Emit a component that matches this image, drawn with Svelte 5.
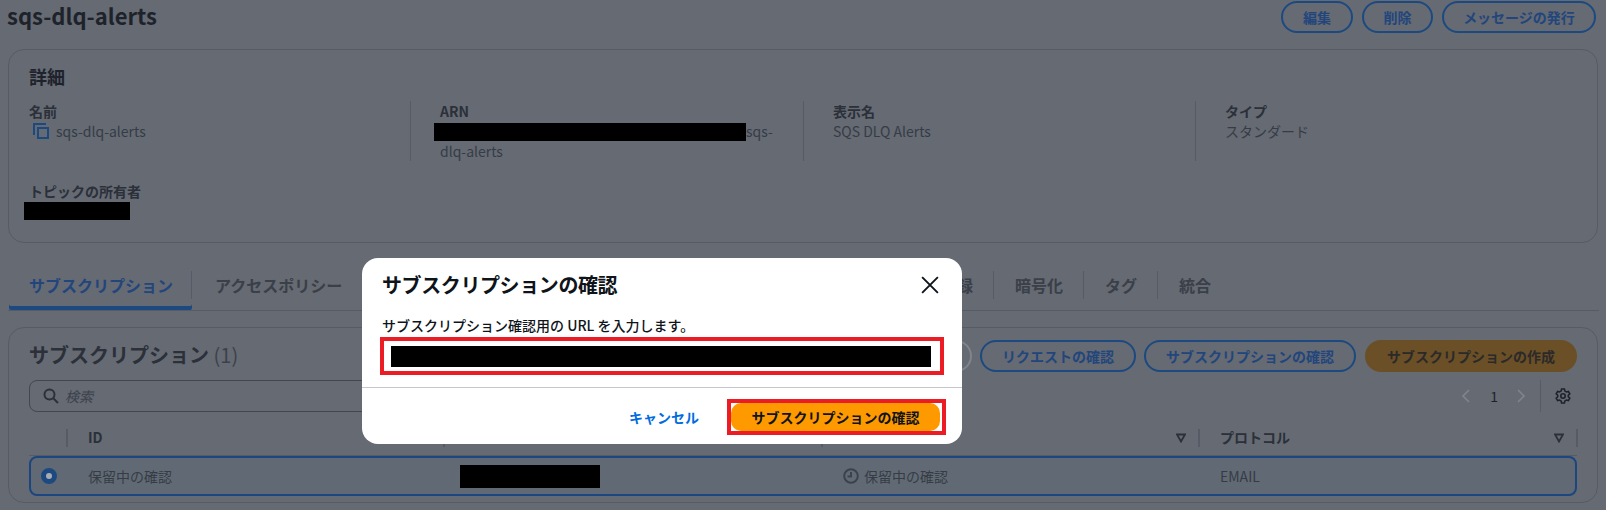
<script lang="ts">
  const details = [
    { label: "名前", value: "sqs-dlq-alerts", copy: true },
    { label: "ARN", arn: true },
    { label: "表示名", value: "SQS DLQ Alerts" },
    { label: "タイプ", value: "スタンダード" },
  ];
  const tabs = [
    "サブスクリプション",
    "アクセスポリシー",
    "データ保護ポリシー",
    "配信ポリシー (HTTP/S)",
    "配信ステータスのログ記録",
    "暗号化",
    "タグ",
    "統合",
  ];
</script>

<div class="page">
  <header class="head">
    <h1>sqs-dlq-alerts</h1>
    <div class="actions">
      <button class="btn edit">編集</button>
      <button class="btn del">削除</button>
      <button class="btn pub">メッセージの発行</button>
    </div>
  </header>

  <section class="card details">
    <h2>詳細</h2>
    <div class="grid">
      {#each details as d, i}
        <div class="cell" class:first={i === 0}>
          <div class="label">{d.label}</div>
          {#if d.arn}
            <div class="value arn"><span class="redact arn-box"></span>sqs-<br />dlq-alerts</div>
          {:else}
            <div class="value">
              {#if d.copy}
                <svg class="copy" viewBox="0 0 16 16" width="16" height="16" fill="none" stroke="#1c4a80" stroke-width="2">
                  <path d="M1 12V1h12" />
                  <rect x="5" y="5" width="10" height="10" />
                </svg>
              {/if}
              {d.value}
            </div>
          {/if}
        </div>
      {/each}
      <div class="cell owner first">
        <div class="label">トピックの所有者</div>
        <span class="redact owner-box"></span>
      </div>
    </div>
  </section>

  <nav class="tabs">
    {#each tabs as t, i}
      <div class="tab" class:active={i === 0}><span>{t}</span></div>
    {/each}
  </nav>

  <section class="card subs">
    <div class="subs-head">
      <div class="subs-title">サブスクリプション <span class="count">(1)</span></div>
      <div class="subs-actions">
        <button class="btn off">編集</button>
        <button class="btn off">削除</button>
        <button class="btn">リクエストの確認</button>
        <button class="btn">サブスクリプションの確認</button>
        <button class="btn primary">サブスクリプションの作成</button>
      </div>
    </div>

    <div class="tools">
      <div class="search">
        <svg viewBox="0 0 16 16" width="16" height="16" fill="none" stroke="#2b3039" stroke-width="2">
          <circle cx="6.5" cy="6.5" r="5" />
          <path d="M10.5 10.5 15 15" />
        </svg>
        <em>検索</em>
      </div>
      <div class="pager">
        <svg viewBox="0 0 10 16" width="10" height="16" fill="none" stroke="#80858d" stroke-width="1.6"><path d="M8 2 2 8l6 6" /></svg>
        <span>1</span>
        <svg viewBox="0 0 10 16" width="10" height="16" fill="none" stroke="#80858d" stroke-width="1.6"><path d="m2 2 6 6-6 6" /></svg>
        <div class="pager-div">
          <svg viewBox="0 0 16 16" width="16" height="16" fill="none" stroke="#1e232b" stroke-width="1.6">
            <path d="M6.6 1h2.8l.5 2.1 1.5.9 2-.6 1.4 2.4-1.5 1.5v1.4l1.5 1.5-1.4 2.4-2-.6-1.5.9-.5 2.1H6.6l-.5-2.1-1.500-.9-2 .6L1.200 10.200l1.500-1.500V7.300L1.200 5.800l1.400-2.400 2 .6 1.500-.9z" />
            <circle cx="8" cy="8" r="2.200" />
          </svg>
        </div>
      </div>
    </div>

    <div class="thead">
      <div class="th"></div>
      <div class="th">ID</div>
      <div class="th"></div>
      <div class="th"><svg class="tri" viewBox="0 0 10 10" width="10" height="10"><path d="M1 1.500h8L5 8.500z" fill="none" stroke="#2b3039" stroke-width="1.800" /></svg></div>
      <div class="th">プロトコル<svg class="tri" viewBox="0 0 10 10" width="10" height="10"><path d="M1 1.500h8L5 8.500z" fill="none" stroke="#2b3039" stroke-width="1.800" /></svg></div>
    </div>
    <div class="row">
      <div class="td"><span class="radio"></span></div>
      <div class="td">保留中の確認</div>
      <div class="td"><span class="redact row-box"></span></div>
      <div class="td status">
        <svg viewBox="0 0 16 16" width="16" height="16" fill="none" stroke="#3c424b" stroke-width="2">
          <circle cx="8" cy="8" r="6.800" />
          <path d="M8 4v4.500H4.500" />
        </svg>
        保留中の確認
      </div>
      <div class="td">EMAIL</div>
    </div>
  </section>

  <div class="modal" role="dialog">
    <div class="modal-head">
      <h3>サブスクリプションの確認</h3>
      <svg viewBox="0 0 16 16" width="18" height="18" fill="none" stroke="#0f141a" stroke-width="1.700">
        <path d="M1 1l14 14M15 1 1 15" />
      </svg>
    </div>
    <div class="modal-body">
      <div class="modal-label">サブスクリプション確認用の URL を入力します。</div>
      <div class="mark url"><span class="redact url-box"></span></div>
    </div>
    <div class="modal-foot">
      <span class="cancel">キャンセル</span>
      <div class="mark confirm"><button>サブスクリプションの確認</button></div>
    </div>
  </div>
</div>

<style>
  :global(body) {
    margin: 0;
    background: #656a73;
  }
  .page {
    position: relative;
    height: 510px;
    width: 1606px;
    overflow: hidden;
    box-sizing: border-box;
    padding: 1px 8px 0;
    background: #656a73;
    color: #363c46;
    font-family: "Noto Sans CJK JP", "Noto Sans", sans-serif;
    font-size: 14px;
    line-height: 20px;
  }
  .head {
    display: flex;
    justify-content: space-between;
    align-items: center;
    height: 32px;
  }
  h1 {
    margin: -4px 0 0 -1px;
    font-size: 22px;
    font-weight: 700;
    line-height: 32px;
    color: #1e232b;
  }
  .actions {
    display: flex;
    gap: 9px;
    margin-right: 2px;
  }
  .btn {
    box-sizing: border-box;
    height: 32px;
    padding: 0 20px;
    border: 2px solid #1c4a80;
    border-radius: 16px;
    background: transparent;
    color: #22467c;
    font: 700 14px/1 "Noto Sans CJK JP", sans-serif;
    white-space: nowrap;
  }
  .edit { width: 72px; padding: 0; }
  .del { width: 71px; padding: 0; }
  .pub { width: 154px; padding: 0; }
  .card {
    box-sizing: border-box;
    width: 1590px;
    border: 1px solid #565b65;
    border-radius: 16px;
  }
  .details {
    height: 194px;
    margin-top: 16px;
    padding: 14px 0 0 20px;
  }
  h2 {
    margin: 0;
    font-size: 18px;
    font-weight: 700;
    line-height: 24px;
    color: #1e232b;
  }
  .grid {
    display: grid;
    grid-template-columns: 381px 393px 392px 1fr;
    row-gap: 20px;
    margin-top: 13px;
  }
  .cell {
    min-height: 60px;
    padding-left: 29px;
    border-left: 1px solid #565b65;
  }
  .cell.first {
    padding-left: 0;
    border-left: 0;
  }
  .owner {
    grid-column: 1 / 2;
    min-height: 0;
  }
  .label {
    font-weight: 700;
    color: #2b3039;
  }
  .value {
    display: flex;
    align-items: center;
    gap: 7px;
  }
  .value.arn {
    display: block;
  }
  .copy {
    margin-left: 4px;
  }
  .redact {
    display: inline-block;
    background: #000;
  }
  .arn-box {
    width: 312px;
    height: 18px;
    margin-left: -6px;
    vertical-align: -4px;
  }
  .owner-box {
    display: block;
    width: 106px;
    height: 18px;
    margin-left: -5px;
    margin-top: 1px;
  }
  .tabs {
    display: flex;
    gap: 1px;
    height: 44px;
    width: 1590px;
    margin-top: 23px;
    border-bottom: 1px solid #565b65;
    box-sizing: content-box;
    align-items: stretch;
    padding-left: 1px;
  }
  .tab {
    position: relative;
    display: flex;
    align-items: center;
    padding: 0 0 7px;
    font-size: 16px;
    font-weight: 700;
    white-space: nowrap;
    color: #3a3f48;
  }
  .tab span {
    padding: 0 20px;
    line-height: 28px;
    border-right: 1px solid #565b65;
  }
  .tab:last-child span {
    border-right: 0;
  }
  .tab:nth-child(4) span {
    padding-right: 19px;
  }
  .tab.active {
    margin-right: 2px;
    color: #22467c;
    box-shadow: inset 0 -4px 0 #1c4a80;
    border-radius: 2px;
  }
  .tab.active span {
    padding-right: 18px;
  }
  .subs {
    height: 176px;
    margin-top: 16px;
    padding: 12px 20px 0;
  }
  .subs-head {
    display: flex;
    justify-content: space-between;
    align-items: center;
    height: 32px;
  }
  .subs-title {
    margin-top: -3px;
    font-size: 20px;
    font-weight: 700;
    line-height: 28px;
    color: #2b3039;
  }
  .count {
    font-weight: 400;
    color: #3c424b;
  }
  .subs-actions {
    display: flex;
    gap: 8px;
  }
  .off {
    border-color: #80858d;
    color: #80858d;
  }
  .primary {
    margin-left: 1px;
    background: #6b4f27;
    border-color: #6b4f27;
    color: #2b2a29;
  }
  .tools {
    display: flex;
    justify-content: space-between;
    margin-top: 8px;
    height: 32px;
  }
  .search {
    box-sizing: border-box;
    display: flex;
    align-items: center;
    gap: 6px;
    width: 800px;
    padding-left: 13px;
    border: 1px solid #43484f;
    border-radius: 8px;
  }
  .search em {
    color: #3c424b;
  }
  .pager {
    display: flex;
    align-items: center;
    color: #1e232b;
    gap: 20px;
  }
  .pager span {
    margin: 0 -2px 0 -1px;
  }
  .pager-div {
    display: flex;
    align-items: center;
    height: 32px;
    margin-left: -6px;
    padding: 0 6px 0 14px;
    border-left: 1px solid #565b65;
  }
  .thead, .row {
    display: grid;
    grid-template-columns: 39px 377px 378px 377px 378px;
  }
  .thead {
    height: 37px;
    margin-top: 7px;
    border-bottom: 1px solid #565b65;
    box-sizing: border-box;
    font-weight: 700;
    color: #2b3039;
  }
  .th {
    position: relative;
    display: flex;
    align-items: center;
    height: 36px;
    padding-left: 20px;
  }
  .th::after {
    content: "";
    position: absolute;
    right: 0;
    top: 10px;
    height: 18px;
    width: 2px;
    background: #565b65;
  }
  .tri {
    position: absolute;
    right: 14px;
    top: 14px;
  }
  .row {
    box-sizing: border-box;
    height: 40px;
    border: 2px solid #1c4680;
    border-radius: 8px;
    background: #616a74;
  }
  .td {
    display: flex;
    align-items: center;
    gap: 5px;
    padding-left: 18px;
  }
  .td:first-child {
    padding-left: 10px;
  }
  .td:nth-child(2) {
    padding-left: 18px;
  }
  .td:nth-child(3) {
    padding-left: 13px;
  }
  .radio {
    box-sizing: border-box;
    width: 16px;
    height: 16px;
    border: 5px solid #1c4a80;
    border-radius: 50%;
    background: #a9adb3;
  }
  .row-box {
    width: 140px;
    height: 23px;
  }
  .modal {
    position: absolute;
    left: 362px;
    top: 258px;
    width: 600px;
    height: 186px;
    background: #fff;
    border-radius: 16px;
    color: #0f141a;
  }
  .modal-head {
    display: flex;
    justify-content: space-between;
    align-items: center;
    padding: 12px 23px 0 20px;
    height: 30px;
  }
  h3 {
    margin: 0;
    font-size: 20px;
    font-weight: 700;
    line-height: 30px;
    letter-spacing: -0.4px;
  }
  .modal-body {
    padding: 15px 18px 0;
    height: 88px;
    box-sizing: border-box;
    border-bottom: 1px solid #c6c6cd;
  }
  .modal-label {
    padding-left: 2px;
    font-size: 14px;
    font-weight: 500;
    line-height: 20px;
  }
  .mark {
    box-sizing: border-box;
    border: 4px solid #ec1c24;
    background: #fff;
  }
  .url {
    display: flex;
    align-items: center;
    justify-content: center;
    width: 564px;
    height: 38px;
    margin-top: 2px;
  }
  .url-box {
    width: 540px;
    height: 21px;
    margin-right: 2px;
  }
  .modal-foot {
    display: flex;
    justify-content: flex-end;
    align-items: center;
    gap: 28px;
    padding: 11px 16px 0 0;
  }
  .cancel {
    color: #006ce0;
    font-weight: 700;
  }
  .confirm {
    width: 219px;
    height: 36px;
    padding-right: 2px;
  }
  .confirm button {
    display: block;
    width: 100%;
    height: 100%;
    border: 0;
    padding: 0;
    border-radius: 10px;
    background: #ff9900;
    color: #0f141a;
    font: 700 14px/1 "Noto Sans CJK JP", sans-serif;
  }
</style>
